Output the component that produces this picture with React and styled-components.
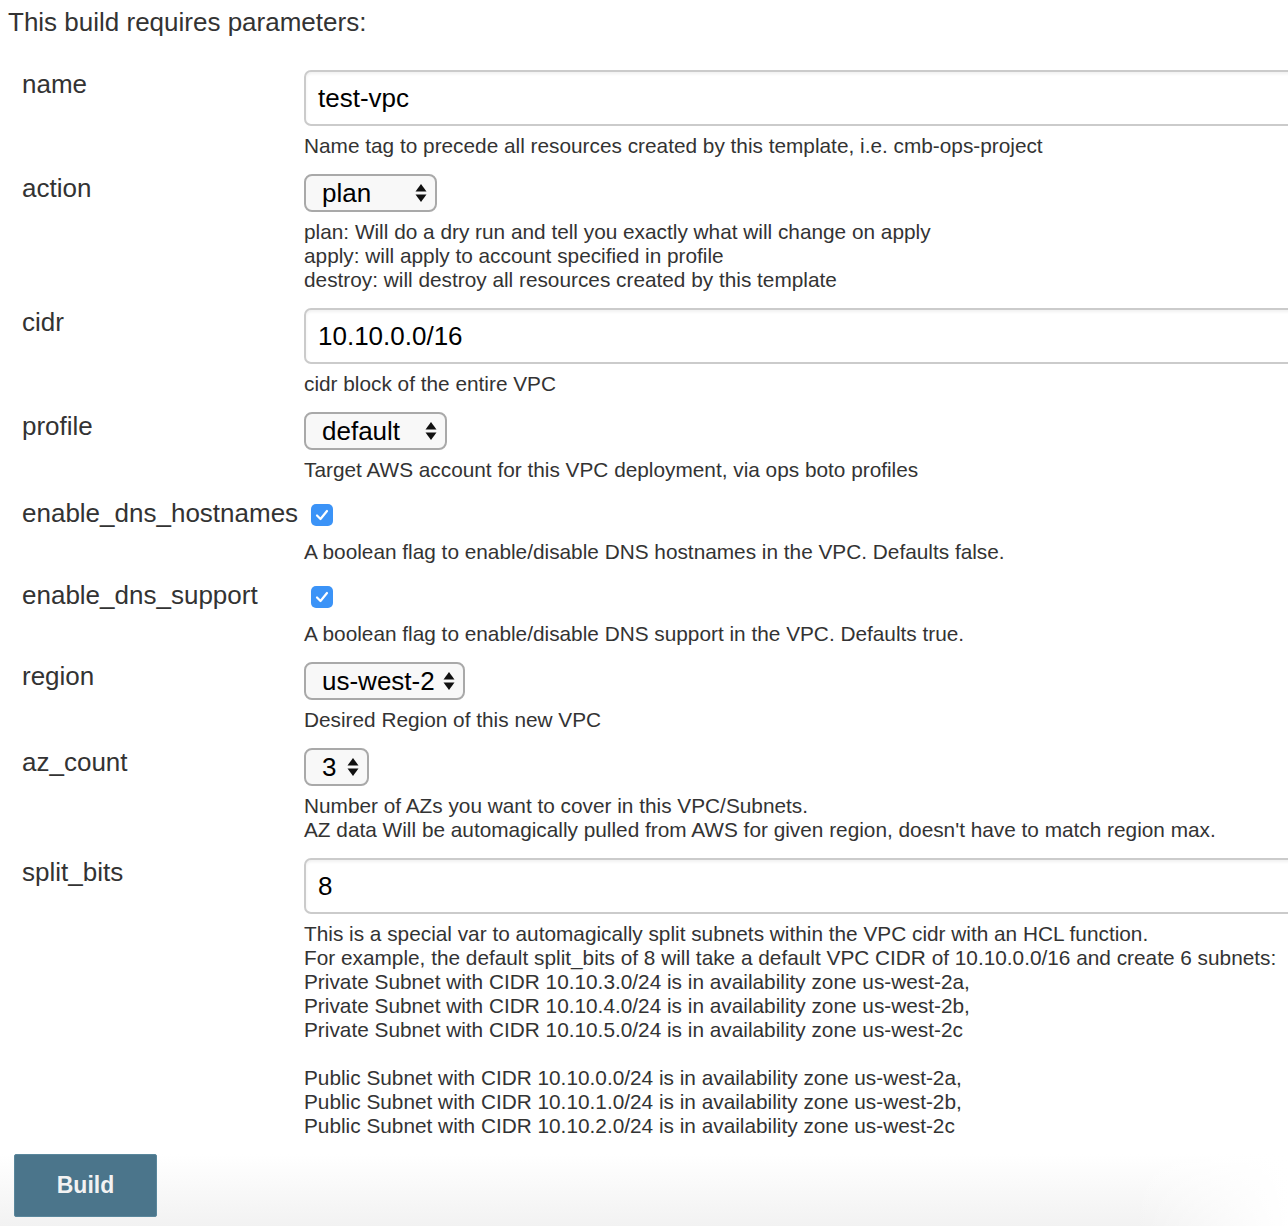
import React from "react";
import styled, { createGlobalStyle } from "styled-components";

const Global = createGlobalStyle`
  html, body { margin: 0; padding: 0; background: #fff; }
  body { overflow: hidden; font-family: "Liberation Sans", Arial, sans-serif; color: #333; }
`;

const Page = styled.div`
  padding: 8px 8px 0 8px;
  width: 1288px;
  box-sizing: border-box;
`;

const Title = styled.div`
  font-size: 26px;
  line-height: 28px;
  margin-bottom: 34px;
  white-space: nowrap;
`;

const Row = styled.div`
  display: grid;
  grid-template-columns: 296px 1fr;
  padding-bottom: 16px;
`;

const Label = styled.div`
  font-size: 26px;
  line-height: 28px;
  padding-left: 14px;
  margin-top: ${(p) => p.$offset || 0}px;
  white-space: nowrap;
`;

const Value = styled.div`
  display: flex;
  flex-direction: column;
  align-items: flex-start;
  min-width: 0;
`;

const TextInput = styled.div`
  box-sizing: border-box;
  width: 1100px;
  height: 56px;
  border: 2px solid #cbcbcb;
  border-radius: 7px;
  box-shadow: inset 0 2px 3px rgba(0, 0, 0, 0.06);
  padding-left: 12px;
  display: flex;
  align-items: center;
  font-size: 26px;
  color: #000;
  background: #fff;
`;

const Select = styled.div`
  box-sizing: border-box;
  width: ${(p) => p.$width}px;
  height: 38px;
  border: 2px solid #a9a9a9;
  border-radius: 8px;
  background: #f8f8f8;
  display: flex;
  align-items: center;
  justify-content: space-between;
  padding: 0 8px 0 16px;
  font-size: 26px;
  color: #000;
`;

const CheckRow = styled.div`
  height: 34px;
  display: flex;
  align-items: center;
  padding-left: 7px;
`;

const CheckBox = styled.span`
  width: 22px;
  height: 22px;
  border-radius: 5px;
  background: #3b93f7;
  display: inline-flex;
  align-items: center;
  justify-content: center;
`;

const Desc = styled.div`
  margin-top: 8px;
  font-size: 20.8px;
  line-height: 24px;
  color: #333;
  white-space: nowrap;
`;

const Blank = styled.div`
  height: 24px;
`;

const Footer = styled.div`
  margin: 0 -8px;
  padding: 0 0 9px 14px;
  background:
    linear-gradient(to right, rgba(255,255,255,0) 88%, #fff 100%),
    linear-gradient(to bottom, #fff 0%, #f2f2f2 100%);
`;

const BuildButton = styled.button`
  width: 143px;
  height: 63px;
  background: #4b758b;
  border: 1px solid #5a879c;
  border-radius: 2px;
  color: #f2f2f2;
  font-family: "Liberation Sans", Arial, sans-serif;
  font-weight: bold;
  font-size: 23px;
  padding: 0;
  cursor: pointer;
`;

const Arrows = () => (
  <svg width="12" height="20" viewBox="0 0 12 20">
    <path d="M6 1 L11.5 8.5 L0.5 8.5 Z" fill="#111" />
    <path d="M6 19 L11.5 11.5 L0.5 11.5 Z" fill="#111" />
  </svg>
);

const Check = () => (
  <CheckBox>
    <svg width="16" height="16" viewBox="0 0 16 16">
      <path d="M3 8.5 L6.5 12 L13 4" stroke="#fff" strokeWidth="2.2" fill="none" strokeLinecap="round" strokeLinejoin="round" />
    </svg>
  </CheckBox>
);

const Lines = ({ lines }) => (
  <Desc>
    {lines.map((l, i) => (l === "" ? <Blank key={i} /> : <div key={i}>{l}</div>))}
  </Desc>
);

const params = [
  { label: "name", kind: "input", value: "test-vpc", desc: ["Name tag to precede all resources created by this template, i.e. cmb-ops-project"] },
  {
    label: "action", kind: "select", value: "plan", width: 133,
    desc: [
      "plan: Will do a dry run and tell you exactly what will change on apply",
      "apply: will apply to account specified in profile",
      "destroy: will destroy all resources created by this template",
    ],
  },
  { label: "cidr", kind: "input", value: "10.10.0.0/16", desc: ["cidr block of the entire VPC"] },
  { label: "profile", kind: "select", value: "default", width: 143, desc: ["Target AWS account for this VPC deployment, via ops boto profiles"] },
  { label: "enable_dns_hostnames", kind: "check", desc: ["A boolean flag to enable/disable DNS hostnames in the VPC. Defaults false."] },
  { label: "enable_dns_support", kind: "check", desc: ["A boolean flag to enable/disable DNS support in the VPC. Defaults true."] },
  { label: "region", kind: "select", value: "us-west-2", width: 161, desc: ["Desired Region of this new VPC"] },
  {
    label: "az_count", kind: "select", value: "3", width: 65,
    desc: [
      "Number of AZs you want to cover in this VPC/Subnets.",
      "AZ data Will be automagically pulled from AWS for given region, doesn't have to match region max.",
    ],
  },
  {
    label: "split_bits", kind: "input", value: "8",
    desc: [
      "This is a special var to automagically split subnets within the VPC cidr with an HCL function.",
      "For example, the default split_bits of 8 will take a default VPC CIDR of 10.10.0.0/16 and create 6 subnets:",
      "Private Subnet with CIDR 10.10.3.0/24 is in availability zone us-west-2a,",
      "Private Subnet with CIDR 10.10.4.0/24 is in availability zone us-west-2b,",
      "Private Subnet with CIDR 10.10.5.0/24 is in availability zone us-west-2c",
      "",
      "Public Subnet with CIDR 10.10.0.0/24 is in availability zone us-west-2a,",
      "Public Subnet with CIDR 10.10.1.0/24 is in availability zone us-west-2b,",
      "Public Subnet with CIDR 10.10.2.0/24 is in availability zone us-west-2c",
    ],
  },
];

export default function App() {
  return (
    <>
      <Global />
      <Page>
        <Title>This build requires parameters:</Title>
        {params.map((p) => (
          <Row key={p.label}>
            <Label $offset={p.kind === "check" ? 1 : 0}>{p.label}</Label>
            <Value>
              {p.kind === "input" && <TextInput>{p.value}</TextInput>}
              {p.kind === "select" && (
                <Select $width={p.width}>
                  <span>{p.value}</span>
                  <Arrows />
                </Select>
              )}
              {p.kind === "check" && (
                <CheckRow>
                  <Check />
                </CheckRow>
              )}
              <Lines lines={p.desc} />
            </Value>
          </Row>
        ))}
        <Footer>
          <BuildButton>Build</BuildButton>
        </Footer>
      </Page>
    </>
  );
}
